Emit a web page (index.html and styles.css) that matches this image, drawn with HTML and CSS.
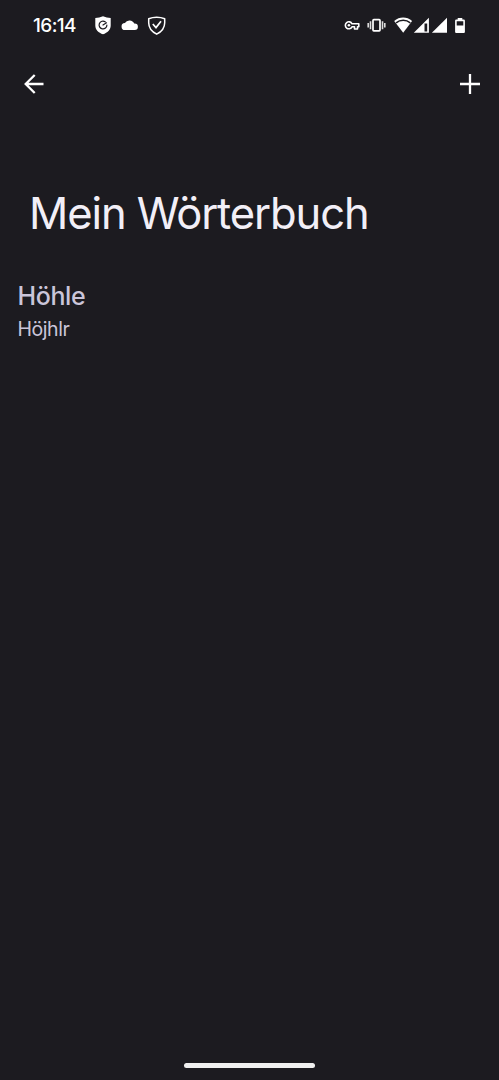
FILE: index.html
```html
<!DOCTYPE html>
<html lang="de">
<head>
<meta charset="utf-8">
<title>Mein Wörterbuch</title>
<link rel="stylesheet" href="styles.css">
</head>
<body>
<div class="screen">
  <header class="status">
    <span class="clock">16:14</span>
    <svg class="notifications" width="74" height="22" viewBox="0 0 74 22">
      <path fill="#fff" d="M9 2.200c2.500 1 5 1.600 7.700 1.800v7.500c0 4.300-3.200 7.200-7.700 8.800-4.500-1.600-7.700-4.500-7.700-8.800V4C4 3.800 6.500 3.200 9 2.200z"/>
      <path fill="none" stroke="#1c1b20" stroke-width="1.200" stroke-linecap="round" stroke-linejoin="round" d="M11.200 7.800A3.900 3.900 0 1 0 12.900 11M9 11l3.500-2.200"/>
      <path fill="#fff" d="M31.200 16a3.500 3.500 0 0 1-.3-7 5.200 5.200 0 0 1 9.300.6h.5a3.200 3.200 0 0 1 0 6.400z"/>
      <path fill="none" stroke="#fff" stroke-width="1.500" stroke-linejoin="round" d="M62.700 3.200c3 0 5.800.6 8 1.500v4c0 5.500-3.200 9-8 11.500-4.800-2.500-8-6-8-11.500v-4c2.200-.9 5-1.500 8-1.500z"/>
      <path fill="none" stroke="#fff" stroke-width="1.700" d="m58.800 10 3.200 3.600 5-6.300"/>
    </svg>
    <svg class="system" width="126" height="22" viewBox="0 0 126 22">
      <path fill="none" stroke="#fff" stroke-width="1.600" stroke-linejoin="round" d="M9 9.800h6.800v3h-1.300v2.200h-3v-2.200H9a3.500 3.500 0 1 1 0-3z"/>
      <circle cx="5.900" cy="11.300" r="1.300" fill="#fff"/>
      <rect x="30" y="5.700" width="7" height="11.200" rx=".8" fill="none" stroke="#fff" stroke-width="1.700"/>
      <path stroke="#ddd" stroke-width="1.600" d="M27.500 7.300v8M25.200 9.100v4.500M39.500 7.300v8M41.800 9.100v4.500"/>
      <path fill="#fff" d="M51.200 6.900c5.200-4.600 12.700-4.600 17.900 0L60.200 18.700z"/>
      <path fill="none" stroke="#1c1b20" stroke-width="1.500" d="M53.100 8.900c4.200-3.400 10-3.400 14.200 0"/>
      <path fill="#fff" fill-rule="evenodd" d="M85.900 3.700v15.100H70.800zM81.500 9.500v8h2.700v-8z"/>
      <path fill="#fff" d="M104 3.700v15.100H88.900z"/>
      <path fill="#fff" fill-rule="evenodd" d="M114.700 4h4.600v1.600h1.500q1.100 0 1.100 1.100V18q0 1.100-1.100 1.100h-7.600q-1.100 0-1.100-1.100V6.700q0-1.100 1.100-1.100h1.500zM113.700 7.200v4.200h6.600V7.200z"/>
    </svg>
  </header>
  <nav class="toolbar">
    <svg width="20" height="20" viewBox="0 0 20 20"><path class="stroke" d="M19.500 10H1.800M10.700 1 1.700 10l9 9"/></svg>
    <svg width="20" height="20" viewBox="0 0 20 20"><path class="stroke" d="M10 0v20M0 10h20"/></svg>
  </nav>
  <h1 class="title">Mein Wörterbuch</h1>
  <main class="entry">
    <div class="word">Höhle</div>
    <div class="shortcut">Höjhlr</div>
  </main>
  <div class="handle"></div>
</div>
</body>
</html>
```
FILE: styles.css
```css
body {
  margin: 0;
  background: #1c1b20;
  font-family: Inter, "Noto Sans", sans-serif;
}
.screen {
  box-sizing: border-box;
  height: 1080px;
  padding-bottom: 12px;
  display: flex;
  flex-direction: column;
}
.status {
  display: flex;
  align-items: center;
  height: 22px;
  padding: 14px 30px 0 33px;
}
.clock {
  width: 61px;
  padding-top: 2px;
  color: #fff;
  font-size: 19px;
  font-weight: 500;
  line-height: 24px;
  letter-spacing: -.6px;
}
.system { margin-left: auto; }
.toolbar {
  display: flex;
  justify-content: space-between;
  padding: 38px 19px 0 24px;
}
.stroke {
  fill: none;
  stroke: #fff;
  stroke-width: 2.3;
}
.title {
  margin: 91px 0 0 29px;
  color: #f2eff7;
  font-size: 43.5px;
  font-weight: 400;
  line-height: 56px;
  letter-spacing: -1.1px;
  white-space: nowrap;
}
.entry { padding: 38px 17.5px 0; color: #cac5d9; }
.word {
  font-size: 25px;
  font-weight: 500;
  line-height: 34px;
  letter-spacing: -.4px;
}
.shortcut {
  padding-top: 1px;
  font-size: 19.5px;
  line-height: 30px;
  letter-spacing: -.45px;
}
.handle {
  width: 131px;
  height: 5px;
  margin: auto auto 0;
  border-radius: 3px;
  background: #f0f0f0;
}
```
